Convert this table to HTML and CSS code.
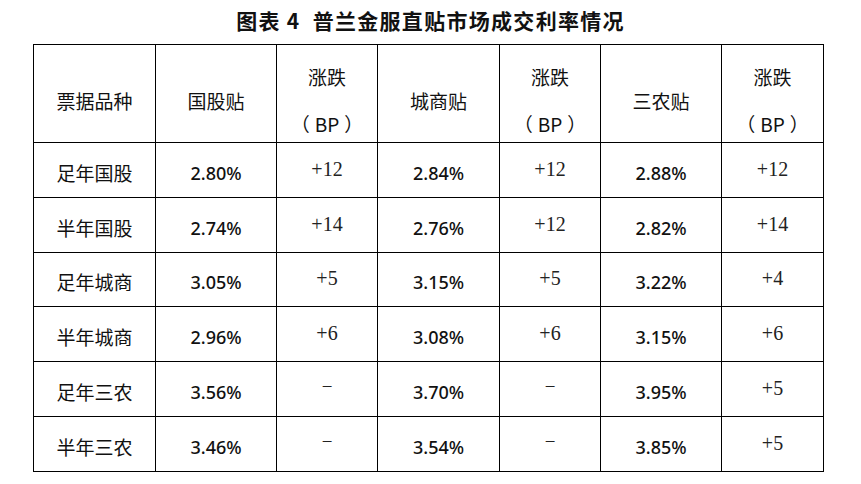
FILE: index.html
```html
<!DOCTYPE html>
<html lang="zh">
<head>
<meta charset="utf-8">
<link rel="stylesheet" href="styles.css">
</head>
<body>
<div class="page">
  <h1 class="title">图表 4&nbsp; 普兰金服直贴市场成交利率情况</h1>
  <table class="grid">
    <colgroup>
      <col class="c1"><col class="c2"><col class="c3"><col class="c4"><col class="c5"><col class="c6"><col class="c7">
    </colgroup>
    <tr class="head">
      <td class="cn">票据品种</td>
      <td class="cn">国股贴</td>
      <td class="cn two"><div class="l1">涨跌</div><div class="l2"><span class="par">（</span>BP<span class="par">）</span></div></td>
      <td class="cn">城商贴</td>
      <td class="cn two"><div class="l1">涨跌</div><div class="l2"><span class="par">（</span>BP<span class="par">）</span></div></td>
      <td class="cn">三农贴</td>
      <td class="cn two"><div class="l1">涨跌</div><div class="l2"><span class="par">（</span>BP<span class="par">）</span></div></td>
    </tr>
    <tr class="row">
      <td class="cn">足年国股</td><td class="num">2.80%</td><td class="chg">+12</td><td class="num">2.84%</td><td class="chg">+12</td><td class="num">2.88%</td><td class="chg">+12</td>
    </tr>
    <tr class="row">
      <td class="cn">半年国股</td><td class="num">2.74%</td><td class="chg">+14</td><td class="num">2.76%</td><td class="chg">+12</td><td class="num">2.82%</td><td class="chg">+14</td>
    </tr>
    <tr class="row">
      <td class="cn">足年城商</td><td class="num">3.05%</td><td class="chg">+5</td><td class="num">3.15%</td><td class="chg">+5</td><td class="num">3.22%</td><td class="chg">+4</td>
    </tr>
    <tr class="row">
      <td class="cn">半年城商</td><td class="num">2.96%</td><td class="chg">+6</td><td class="num">3.08%</td><td class="chg">+6</td><td class="num">3.15%</td><td class="chg">+6</td>
    </tr>
    <tr class="row">
      <td class="cn">足年三农</td><td class="num">3.56%</td><td class="chg dash">−</td><td class="num">3.70%</td><td class="chg dash">−</td><td class="num">3.95%</td><td class="chg">+5</td>
    </tr>
    <tr class="row">
      <td class="cn">半年三农</td><td class="num">3.46%</td><td class="chg dash">−</td><td class="num">3.54%</td><td class="chg dash">−</td><td class="num">3.85%</td><td class="chg">+5</td>
    </tr>
  </table>
</div>
</body>
</html>
```

FILE: styles.css
```css
html, body {
  margin: 0;
  padding: 0;
  background: #fff;
}

.page {
  width: 861px;
  height: 484px;
  padding-top: 7px;
  box-sizing: border-box;
}

.title {
  margin: 0;
  height: 37px;
  text-align: center;
  font-family: "Noto Sans CJK SC", "Liberation Serif", serif;
  font-weight: 700;
  font-size: 21px;
  line-height: 26px;
  letter-spacing: 1.3px;
  color: #111;
}

.grid {
  margin-left: 33px;
  width: 791px;
  table-layout: fixed;
  border-collapse: collapse;
  color: #111;
}

.c1 { width: 122px; }
.c2 { width: 121px; }
.c3 { width: 101px; }
.c4 { width: 122px; }
.c5 { width: 101px; }
.c6 { width: 121px; }
.c7 { width: 102px; }

.grid td {
  border: 1px solid #000;
  text-align: center;
  vertical-align: middle;
  padding: 6px 0 0 0;
  white-space: nowrap;
}

.head td {
  height: 98px;
  box-sizing: border-box;
  padding-top: 14px;
}

.row td {
  height: 54.8px;
  box-sizing: border-box;
}

.cn {
  font-family: "Noto Sans CJK SC", "Noto Sans", sans-serif;
  font-size: 19px;
  font-weight: 400;
  line-height: 24px;
}

.two .l1 {
  line-height: 24px;
}

.two .l2 {
  margin-top: 23px;
  line-height: 24px;
}

.par {
  display: inline-block;
  margin: 0 5px;
}

.num {
  font-family: "Noto Sans", "Open Sans", sans-serif;
  font-size: 18px;
  font-weight: 500;
  line-height: 24px;
}

.chg {
  font-family: "Liberation Serif", "DejaVu Serif", serif;
  font-size: 20px;
  line-height: 24px;
  padding-top: 0 !important;
  padding-bottom: 2px !important;
  color: #222;
}

.chg.dash {
  font-size: 19px;
  padding-bottom: 4px !important;
}
```
